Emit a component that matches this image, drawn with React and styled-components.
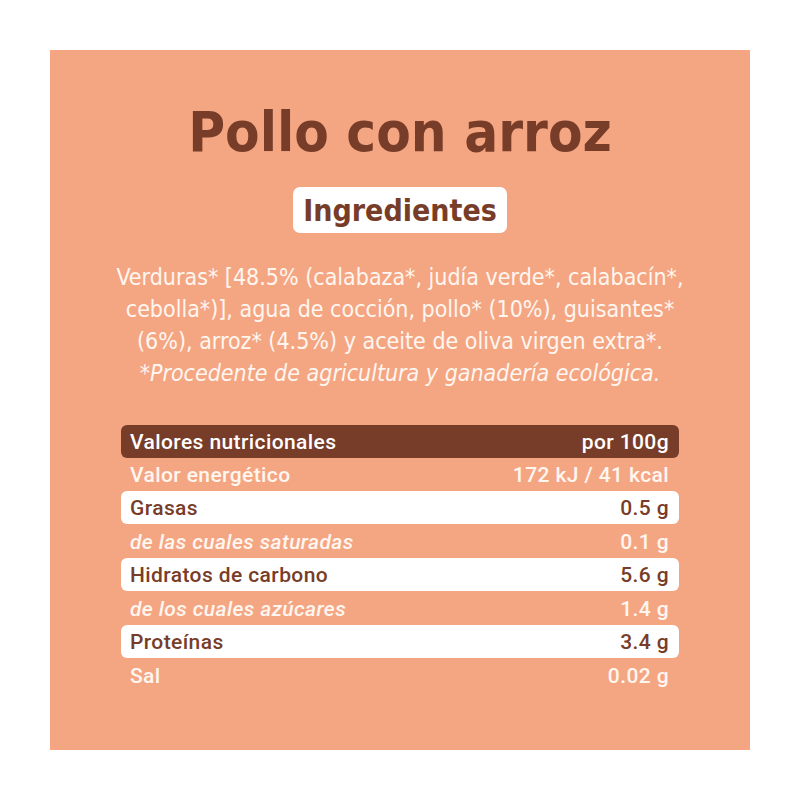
import React from 'react';
import styled, { createGlobalStyle } from 'styled-components';

const Global = createGlobalStyle`
  html, body {
    margin: 0;
    padding: 0;
    background: #ffffff;
  }
  body {
    font-family: 'DejaVu Sans Condensed', 'DejaVu Sans', sans-serif;
  }
`;

const Cafe = '#783d29';
const Salmon = '#f4a683';
const Crema = '#fff6f0';

const Pagina = styled.div`
  width: 800px;
  height: 800px;
  padding: 50px;
  box-sizing: border-box;
`;

const Panel = styled.div`
  width: 700px;
  height: 700px;
  background: ${Salmon};
  display: flex;
  flex-direction: column;
  align-items: center;
  padding-top: 54px;
  box-sizing: border-box;
`;

const Titulo = styled.h1`
  margin: 0;
  color: ${Cafe};
  font-family: 'DejaVu Sans Condensed', 'DejaVu Sans', sans-serif;
  font-weight: bold;
  font-size: 56px;
  line-height: 1;
`;

const Etiqueta = styled.div`
  margin-top: 27px;
  background: #ffffff;
  color: ${Cafe};
  border-radius: 7px;
  padding: 0 10px;
  height: 46px;
  display: flex;
  align-items: center;
  font-weight: bold;
  font-size: 30px;
`;

const Ingredientes = styled.p`
  margin: 28px 0 0;
  text-align: center;
  color: ${Crema};
  font-size: 23px;
  line-height: 32px;
  span {
    display: block;
    white-space: nowrap;
  }
  em {
    display: block;
  }
`;

const Tabla = styled.div`
  margin-top: 36px;
  width: 558px;
  display: flex;
  flex-direction: column;
  font-family: Roboto, 'DejaVu Sans', sans-serif;
  font-weight: 500;
`;

const Fila = styled.div`
  display: flex;
  justify-content: space-between;
  align-items: center;
  height: 33px;
  padding: 0 10px 0 9px;
  border-radius: 6px;
  font-size: 21px;
  letter-spacing: 0.4px;
  background: ${p =>
    p.$tipo === 'cabecera' ? Cafe : p.$tipo === 'blanca' ? '#ffffff' : 'transparent'};
  color: ${p =>
    p.$tipo === 'cabecera' ? '#ffffff' : p.$tipo === 'blanca' ? Cafe : Crema};
  margin-bottom: ${p => (p.$tipo === 'blanca' ? '1px' : '0')};
`;

const Nombre = styled.span`
  font-style: ${p => (p.$italico ? 'italic' : 'normal')};
`;

const filas = [
  { nombre: 'Valores nutricionales', valor: 'por 100g', tipo: 'cabecera' },
  { nombre: 'Valor energético', valor: '172 kJ / 41 kcal' },
  { nombre: 'Grasas', valor: '0.5 g', tipo: 'blanca' },
  { nombre: 'de las cuales saturadas', valor: '0.1 g', italico: true },
  { nombre: 'Hidratos de carbono', valor: '5.6 g', tipo: 'blanca' },
  { nombre: 'de los cuales azúcares', valor: '1.4 g', italico: true },
  { nombre: 'Proteínas', valor: '3.4 g', tipo: 'blanca' },
  { nombre: 'Sal', valor: '0.02 g' },
];

const App = () => (
  <Pagina>
    <Global />
    <Panel>
      <Titulo>Pollo con arroz</Titulo>
      <Etiqueta>Ingredientes</Etiqueta>
      <Ingredientes>
        <span>Verduras* [48.5% (calabaza*, judía verde*, calabacín*,</span>
        <span>cebolla*)], agua de cocción, pollo* (10%), guisantes*</span>
        <span>(6%), arroz* (4.5%) y aceite de oliva virgen extra*.</span>
        <em>*Procedente de agricultura y ganadería ecológica.</em>
      </Ingredientes>
      <Tabla>
        {filas.map(f => (
          <Fila key={f.nombre} $tipo={f.tipo}>
            <Nombre $italico={f.italico}>{f.nombre}</Nombre>
            <span>{f.valor}</span>
          </Fila>
        ))}
      </Tabla>
    </Panel>
  </Pagina>
);

export default App;
